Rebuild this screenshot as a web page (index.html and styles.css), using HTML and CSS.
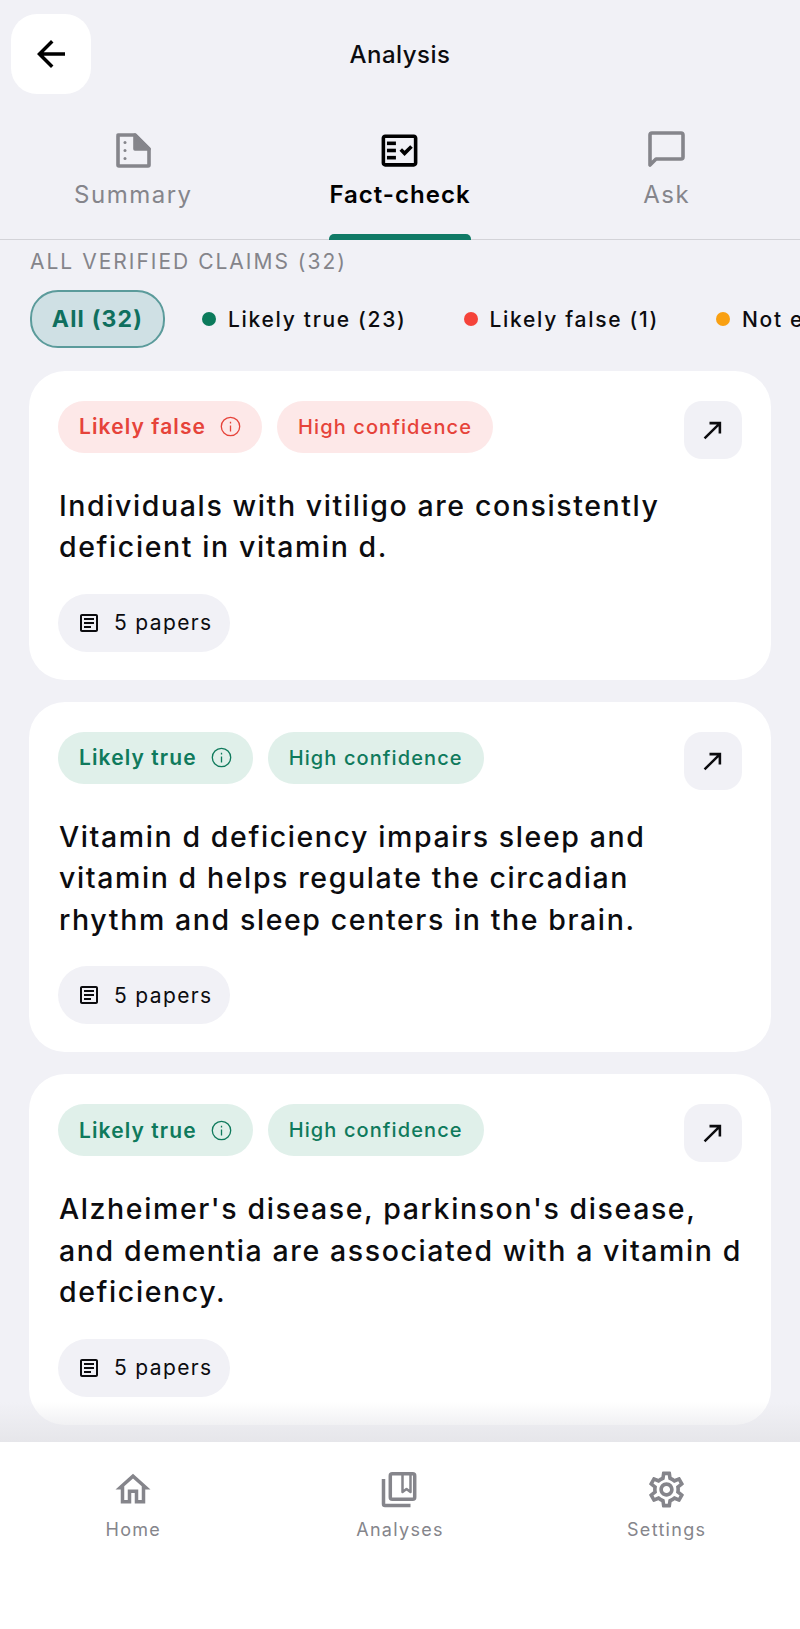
FILE: index.html
```html
<!DOCTYPE html>
<html lang="en">
<head>
    <meta charset="UTF-8">
    <meta name="viewport" content="width=device-width, initial-scale=1.0">
    <title>Analysis</title>
    <link rel="stylesheet" href="styles.css">
</head>
<body>

<div class="app">
    <header class="topbar">
        <button class="back-btn" aria-label="Back">
            <svg width="42" height="42" viewBox="0 0 24 24"><path d="M20 11H7.83l5.59-5.59L12 4l-8 8 8 8 1.41-1.41L7.83 13H20v-2z"/></svg>
        </button>
        <h1>Analysis</h1>
    </header>

    <nav class="tabs">
        <div class="tab">
            <div class="tab-body">
                <svg class="tab-icon line" width="43" height="43" viewBox="0 0 43 43" stroke-width="3.6" stroke-linejoin="round">
                    <path d="M6 6h17l14 14v16a1 1 0 0 1-1 1H7a1 1 0 0 1-1-1V7a1 1 0 0 1 1-1z"/>
                    <path class="solid" d="M23 6l14 14H23z"/>
                    <circle class="solid no-stroke" cx="13" cy="13.500" r="1.500"/>
                    <circle class="solid no-stroke" cx="13" cy="21.500" r="1.500"/>
                    <circle class="solid no-stroke" cx="13" cy="29.500" r="1.500"/>
                </svg>
                <span>Summary</span>
            </div>
        </div>
        <div class="tab active">
            <div class="tab-body">
                <svg class="tab-icon" width="43" height="43" viewBox="0 0 24 24"><path d="M20 3H4c-1.100 0-2 .9-2 2v14c0 1.100.9 2 2 2h16c1.100 0 2-.9 2-2V5c0-1.100-.9-2-2-2zm0 16H4V5h16v14z"/><path d="M19.410 10.420l-1.420-1.420-3.170 3.170-1.410-1.420L12 12.160 14.820 15z"/><rect x="5" y="7" width="5" height="2"/><rect x="5" y="11" width="5" height="2"/><rect x="5" y="15" width="5" height="2"/></svg>
                <span>Fact-check</span>
                <div class="tab-mark"></div>
            </div>
        </div>
        <div class="tab">
            <div class="tab-body">
                <svg class="tab-icon line" width="43" height="43" viewBox="0 0 43 43" stroke-width="3.600" stroke-linejoin="round">
                    <path d="M5 36V6a2 2 0 0 1 2-2h29a2 2 0 0 1 2 2v22a2 2 0 0 1-2 2H11z"/>
                </svg>
                <span>Ask</span>
            </div>
        </div>
    </nav>

    <main class="content">
        <p class="section-label">ALL VERIFIED CLAIMS (32)</p>

        <div class="chips">
            <div class="chip chip-active">All (32)</div>
            <div class="chip"><i class="dot dot-green"></i>Likely true (23)</div>
            <div class="chip"><i class="dot dot-red"></i>Likely false (1)</div>
            <div class="chip"><i class="dot dot-orange"></i>Not enough evidence (8)</div>
        </div>

        <div class="card-list">
            <section class="card">
                <div class="card-top">
                    <span class="pill pill-red strong">Likely false
                        <svg class="line" width="21" height="21" viewBox="0 0 21 21" stroke-width="1.300"><circle cx="10.500" cy="10.500" r="9.200"/><path d="M10.500 9.500v6M10.500 5.800v1.600"/></svg>
                    </span>
                    <span class="pill pill-red">High confidence</span>
                    <button class="open-btn" aria-label="Open">
                        <svg width="28" height="28" viewBox="0 0 24 24"><path d="M9 5v2.200h6.300L4 18.500 5.500 20 16.800 8.700V15H19V5z"/></svg>
                    </button>
                </div>
                <p class="claim">Individuals with vitiligo are consistently deficient in vitamin d.</p>
                <div class="papers">
                    <svg width="24" height="24" viewBox="0 0 24 24"><path d="M19 5v14H5V5h14m0-2H5c-1.100 0-2 .9-2 2v14c0 1.100.9 2 2 2h14c1.100 0 2-.9 2-2V5c0-1.100-.9-2-2-2z"/><path d="M14 17H7v-2h7v2zm3-4H7v-2h10v2zm0-4H7V7h10v2z"/></svg>
                    5 papers
                </div>
            </section>

            <section class="card">
                <div class="card-top">
                    <span class="pill pill-green strong">Likely true
                        <svg class="line" width="21" height="21" viewBox="0 0 21 21" stroke-width="1.300"><circle cx="10.500" cy="10.500" r="9.200"/><path d="M10.500 9.500v6M10.500 5.800v1.600"/></svg>
                    </span>
                    <span class="pill pill-green">High confidence</span>
                    <button class="open-btn" aria-label="Open">
                        <svg width="28" height="28" viewBox="0 0 24 24"><path d="M9 5v2.200h6.300L4 18.500 5.500 20 16.800 8.700V15H19V5z"/></svg>
                    </button>
                </div>
                <p class="claim">Vitamin d deficiency impairs sleep and vitamin d helps regulate the circadian rhythm and sleep centers in the brain.</p>
                <div class="papers">
                    <svg width="24" height="24" viewBox="0 0 24 24"><path d="M19 5v14H5V5h14m0-2H5c-1.100 0-2 .9-2 2v14c0 1.100.9 2 2 2h14c1.100 0 2-.9 2-2V5c0-1.100-.9-2-2-2z"/><path d="M14 17H7v-2h7v2zm3-4H7v-2h10v2zm0-4H7V7h10v2z"/></svg>
                    5 papers
                </div>
            </section>

            <section class="card">
                <div class="card-top">
                    <span class="pill pill-green strong">Likely true
                        <svg class="line" width="21" height="21" viewBox="0 0 21 21" stroke-width="1.300"><circle cx="10.500" cy="10.500" r="9.200"/><path d="M10.500 9.500v6M10.500 5.800v1.600"/></svg>
                    </span>
                    <span class="pill pill-green">High confidence</span>
                    <button class="open-btn" aria-label="Open">
                        <svg width="28" height="28" viewBox="0 0 24 24"><path d="M9 5v2.200h6.300L4 18.500 5.500 20 16.800 8.700V15H19V5z"/></svg>
                    </button>
                </div>
                <p class="claim">Alzheimer's disease, parkinson's disease, and dementia are associated with a vitamin d deficiency.</p>
                <div class="papers">
                    <svg width="24" height="24" viewBox="0 0 24 24"><path d="M19 5v14H5V5h14m0-2H5c-1.100 0-2 .9-2 2v14c0 1.100.9 2 2 2h14c1.100 0 2-.9 2-2V5c0-1.100-.9-2-2-2z"/><path d="M14 17H7v-2h7v2zm3-4H7v-2h10v2zm0-4H7V7h10v2z"/></svg>
                    5 papers
                </div>
            </section>
        </div>
    </main>

    <footer class="bottom-nav">
        <div class="nav-item">
            <svg width="42" height="43" viewBox="0 0 24 24"><path d="M12 5.690l5 4.500V18h-2v-6H9v6H7v-7.810l5-4.500M12 3L2 12h3v8h6v-6h2v6h6v-8h3L12 3z"/></svg>
            <span>Home</span>
        </div>
        <div class="nav-item">
            <svg class="line" width="43" height="43" viewBox="0 0 43 43" stroke-width="3.500" stroke-linejoin="round">
                <path d="M5.500 11v25a1.500 1.500 0 0 0 1.500 1.500h25.500"/>
                <rect x="12.300" y="5.800" width="24.400" height="25.400" rx="2"/>
                <path stroke-width="2.500" d="M24.500 6v18l4-3 4 3V6"/>
            </svg>
            <span>Analyses</span>
        </div>
        <div class="nav-item">
            <svg width="43" height="43" viewBox="0 0 24 24"><path d="M19.430 12.980c.04-.32.07-.64.07-.98 0-.34-.03-.66-.07-.98l2.110-1.650c.19-.15.24-.42.12-.64l-2-3.460c-.09-.16-.26-.25-.44-.25-.06 0-.12.01-.17.03l-2.490 1c-.52-.4-1.080-.73-1.690-.98l-.38-2.650C14.460 2.180 14.250 2 14 2h-4c-.25 0-.46.18-.49.42l-.38 2.650c-.61.25-1.170.59-1.690.98l-2.490-1c-.06-.02-.12-.03-.18-.03-.17 0-.34.09-.43.25l-2 3.460c-.13.22-.07.49.12.64l2.110 1.650c-.04.32-.07.65-.07.98 0 .33.03.66.07.98l-2.110 1.650c-.19.15-.24.42-.12.64l2 3.460c.09.16.26.25.44.25.06 0 .12-.01.17-.03l2.490-1c.52.4 1.080.73 1.690.98l.38 2.650c.03.24.24.42.49.42h4c.25 0 .46-.18.49-.42l.38-2.650c.61-.25 1.170-.59 1.690-.98l2.490 1c.06.02.12.03.18.03.17 0 .34-.09.43-.25l2-3.460c.12-.22.07-.49-.12-.64l-2.110-1.650zm-1.980-1.710c.04.31.05.52.05.73 0 .21-.02.43-.05.73l-.14 1.130.89.7 1.080.84-.7 1.210-1.270-.51-1.040-.42-.9.68c-.43.32-.84.56-1.250.73l-1.060.43-.16 1.130-.2 1.350h-1.400l-.19-1.350-.16-1.130-1.060-.43c-.43-.18-.83-.41-1.230-.71l-.91-.7-1.060.43-1.270.51-.7-1.210 1.080-.84.89-.7-.14-1.130c-.03-.31-.05-.54-.05-.74s.02-.43.05-.73l.14-1.130-.89-.7-1.080-.84.7-1.210 1.270.51 1.040.42.9-.68c.43-.32.84-.56 1.250-.73l1.060-.43.16-1.130.2-1.350h1.390l.19 1.350.16 1.130 1.060.43c.43.18.83.41 1.230.71l.91.7 1.060-.43 1.270-.51.7 1.210-1.070.85-.89.7.14 1.130zM12 8c-2.210 0-4 1.790-4 4s1.790 4 4 4 4-1.790 4-4-1.790-4-4-4zm0 6c-1.100 0-2-.9-2-2s.9-2 2-2 2 .9 2 2-.9 2-2 2z"/></svg>
            <span>Settings</span>
        </div>
    </footer>
</div>

</body>
</html>
```

FILE: styles.css
```css
/* General Styling */
* {
    box-sizing: border-box;
    margin: 0;
    padding: 0;
}

body {
    font-family: Inter, 'Liberation Sans', sans-serif;
    background: #f1f1f6;
    color: #0c0c0f;
}

.app {
    width: 800px;
    height: 1629px;
    display: flex;
    flex-direction: column;
    overflow: hidden;
}

button {
    border: none;
    display: flex;
    align-items: center;
    justify-content: center;
}

svg {
    fill: currentColor;
    flex: none;
}

svg.line {
    fill: none;
    stroke: currentColor;
}

svg .solid {
    fill: currentColor;
}

svg .no-stroke {
    stroke: none;
}

/* Top bar */
.topbar {
    display: grid;
    grid-template-columns: 80px 1fr 80px;
    align-items: center;
    padding: 14px 11px 0;
    height: 94px;
}

.back-btn {
    width: 80px;
    height: 80px;
    background: #fff;
    border-radius: 26px;
    color: #000;
}

.topbar h1 {
    font-size: 24px;
    font-weight: 500;
    letter-spacing: 0.5px;
    text-align: center;
}

/* Tabs */
.tabs {
    display: grid;
    grid-template-columns: repeat(3, 1fr);
    height: 146px;
    border-bottom: 1px solid #d3d3d8;
}

.tab {
    display: flex;
    justify-content: center;
    color: #85858b;
    font-size: 24px;
    letter-spacing: 1.5px;
    padding-top: 29px;
}

.tab.active {
    color: #000;
    font-weight: 600;
    letter-spacing: 1px;
}

.tab-body {
    display: flex;
    flex-direction: column;
    align-items: center;
    margin-bottom: -1px;
}

.tab-icon {
    margin: 6px 0 8px;
}

.tab-mark {
    align-self: stretch;
    height: 6px;
    margin-top: auto;
    background: #107a66;
    border-radius: 5px 5px 0 0;
}

/* Filter chips */
.content {
    flex: 1;
    min-height: 0;
}

.section-label {
    font-size: 21px;
    line-height: 24px;
    letter-spacing: 2px;
    color: #84848a;
    padding: 10px 30px 0;
}

.chips {
    display: flex;
    align-items: center;
    padding: 16px 0 0 30px;
    white-space: nowrap;
}

.chip {
    flex: none;
    display: flex;
    align-items: center;
    height: 58px;
    margin-right: 57px;
    font-size: 21px;
    font-weight: 500;
    letter-spacing: 1.7px;
}

.chip-active {
    width: 135px;
    justify-content: center;
    margin-right: 37px;
    background: #cfe0e4;
    border: 2px solid #5b9b9b;
    border-radius: 28px;
    color: #0f6f5e;
    font-size: 23px;
    font-weight: 700;
    letter-spacing: 1.2px;
}

.dot {
    width: 14px;
    height: 14px;
    border-radius: 50%;
    margin-right: 12px;
}

.dot-green { background: #0b7a5b; }
.dot-red { background: #f5433a; }
.dot-orange { background: #f9a012; }

/* Claim cards */
.card-list {
    display: flex;
    flex-direction: column;
    gap: 22px;
    padding: 22.500px 29px 0;
}

.card {
    background: #fff;
    border-radius: 36px;
    padding: 30px 29px 28px;
}

.card-top {
    display: flex;
    align-items: flex-start;
    gap: 15px;
}

.pill {
    display: flex;
    align-items: center;
    gap: 14px;
    height: 52px;
    padding: 0 21px;
    border-radius: 26px;
    font-size: 20px;
    font-weight: 500;
    letter-spacing: 1.1px;
}

.pill.strong {
    font-weight: 600;
    font-size: 21px;
    letter-spacing: 1.1px;
}

.pill-red {
    background: #fde8e8;
    color: #e6433a;
}

.pill-green {
    background: #e0f0ea;
    color: #0f7a5c;
}

.open-btn {
    width: 58px;
    height: 58px;
    margin-left: auto;
    background: #f1f1f6;
    border-radius: 18px;
    color: #0c0c0f;
}

.claim {
    margin: 26px 0;
    padding-left: 1px;
    font-size: 28.500px;
    font-weight: 500;
    line-height: 41.500px;
    letter-spacing: 1.600px;
}

.papers {
    display: inline-flex;
    align-items: center;
    gap: 13px;
    height: 58px;
    padding: 0 18px 0 19px;
    background: #f1f1f6;
    border-radius: 29px;
    font-size: 21px;
    letter-spacing: 1.350px;
}

/* Bottom nav */
.bottom-nav {
    position: relative;
    display: grid;
    grid-template-columns: repeat(3, 1fr);
    height: 188px;
    padding-top: 26px;
    background: #fff;
    border-top: 1px solid #d8d8dc;
}

.bottom-nav::before {
    content: "";
    position: absolute;
    left: 0;
    right: 0;
    bottom: 100%;
    height: 40px;
    background: linear-gradient(rgba(229, 229, 233, 0), #e6e6ea);
}

.nav-item {
    display: flex;
    flex-direction: column;
    align-items: center;
    gap: 8px;
    color: #85858b;
    font-size: 18px;
    letter-spacing: 1.300px;
}
```
